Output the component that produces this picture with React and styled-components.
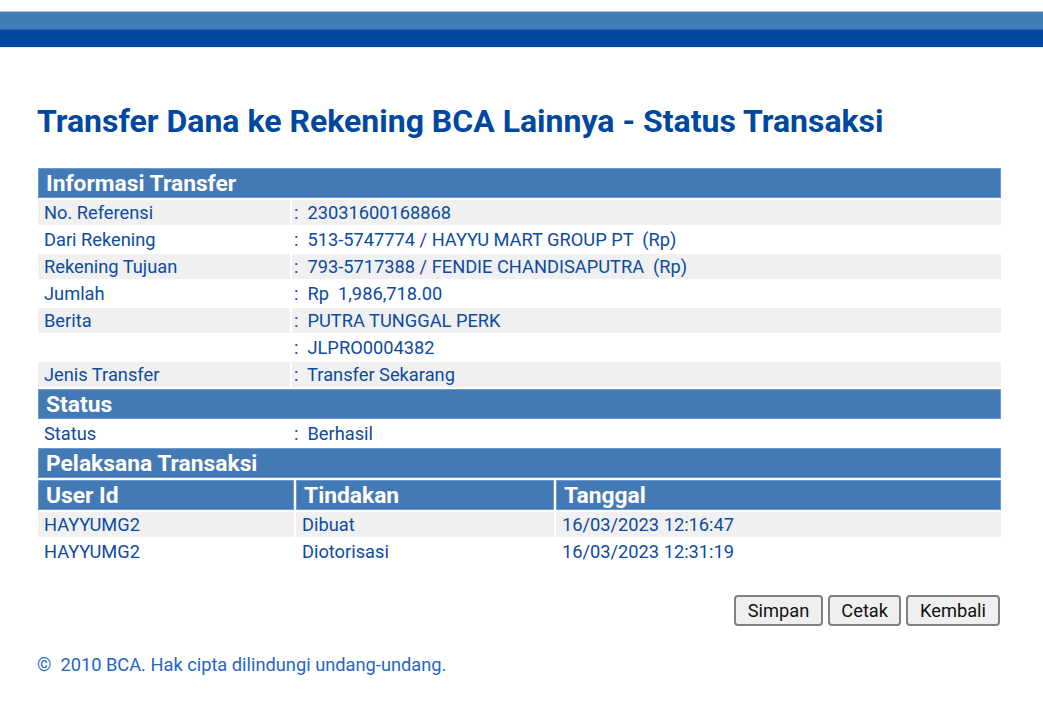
import React from 'react';
import styled, { createGlobalStyle } from 'styled-components';

const infoRows = [
  { label: 'No. Referensi', value: '23031600168868' },
  { label: 'Dari Rekening', value: '513-5747774 / HAYYU MART GROUP PT  (Rp)' },
  { label: 'Rekening Tujuan', value: '793-5717388 / FENDIE CHANDISAPUTRA  (Rp)' },
  { label: 'Jumlah', value: 'Rp  1,986,718.00' },
  { label: 'Berita', value: 'PUTRA TUNGGAL PERK' },
  { label: '', value: 'JLPRO0004382' },
  { label: 'Jenis Transfer', value: 'Transfer Sekarang' }
];

const actors = [
  { id: 'a1', user: 'HAYYUMG2', action: 'Dibuat', date: '16/03/2023 12:16:47' },
  { id: 'a2', user: 'HAYYUMG2', action: 'Diotorisasi', date: '16/03/2023 12:31:19' }
];

const GlobalStyle = createGlobalStyle`
  body {
    margin: 0;
    background: #fff;
    font-family: Roboto, "Liberation Sans", Arial, sans-serif;
  }
`;

const TopBar = styled.div`
  margin-top: 11px;
  border-top: 1px solid #a9c1dd;
  border-bottom: 1px solid #dfe9f5;
`;

const TopStripe = styled.div`
  height: 17px;
  background: ${props => props.dark ? '#0047a0' : '#437bb7'};
  border-top: ${props => props.dark ? '1px solid #2d64ad' : 'none'};
`;

const Content = styled.div`
  padding: 0 40px 0 36px;
`;

const Title = styled.h1`
  margin: 55px 0 27px 1px;
  font-size: 32px;
  font-weight: 700;
  line-height: 36px;
  color: #0047a0;
`;

const Table = styled.table`
  width: 100%;
  border-collapse: separate;
  border-spacing: 2px;
  margin-top: ${props => props.joined ? '-2px' : '0'};
  table-layout: fixed;
`;

const SectionHead = styled.th`
  height: 28px;
  padding: 0 0 0 7px;
  background: #437ab6;
  border: 1px solid #6d9ad0;
  color: #fff;
  font-size: 22.8px;
  font-weight: 700;
  text-align: left;
  white-space: nowrap;
`;

const Row = styled.tr`
  background: ${props => props.shade ? '#f0f0f0' : '#fff'};
`;

const Cell = styled.td`
  height: 25px;
  padding: 0 0 0 ${props => props.pad || 6}px;
  color: #0d4ba0;
  font-size: 18.25px;
  white-space: pre;
  vertical-align: middle;
`;

const ButtonBar = styled.div`
  display: flex;
  justify-content: flex-end;
  gap: 5px;
  margin: 29px 3px 0 0;
`;

const Button = styled.button`
  height: 31px;
  padding: 0 ${props => props.narrow ? 11 : 12}px;
  background: #efefef;
  border: 2px solid #808080;
  border-radius: 4px;
  color: #111;
  font-family: Roboto, "Liberation Sans", Arial, sans-serif;
  font-size: 18.25px;
`;

const Footer = styled.p`
  margin: 28px 0 0 1px;
  color: #1f66c6;
  font-size: 18.25px;
  white-space: pre;
`;

const InfoSection = () =>
  <Table>
    <colgroup>
      <col style={{ width: 252 }}/>
      <col/>
    </colgroup>
    <tbody>
      <tr>
        <SectionHead colSpan={2}>Informasi Transfer</SectionHead>
      </tr>
      {
        infoRows.map((row, i) =>
          <Row key={i} shade={i % 2 === 0}>
            <Cell>{row.label}</Cell>
            <Cell pad={2}>{':  ' + row.value}</Cell>
          </Row>
        )
      }
      <tr>
        <SectionHead colSpan={2}>Status</SectionHead>
      </tr>
      <Row>
        <Cell>Status</Cell>
        <Cell pad={2}>{':  Berhasil'}</Cell>
      </Row>
    </tbody>
  </Table>

const ActorSection = () =>
  <Table joined>
    <colgroup>
      <col style={{ width: 256 }}/>
      <col style={{ width: 258 }}/>
      <col/>
    </colgroup>
    <tbody>
      <tr>
        <SectionHead colSpan={3}>Pelaksana Transaksi</SectionHead>
      </tr>
      <tr>
        <SectionHead>User Id</SectionHead>
        <SectionHead>Tindakan</SectionHead>
        <SectionHead>Tanggal</SectionHead>
      </tr>
      {
        actors.map((a, i) =>
          <Row key={a.id} shade={i % 2 === 0}>
            <Cell>{a.user}</Cell>
            <Cell>{a.action}</Cell>
            <Cell>{a.date}</Cell>
          </Row>
        )
      }
    </tbody>
  </Table>

const App = () =>
  <>
    <GlobalStyle/>
    <TopBar>
      <TopStripe/>
      <TopStripe dark/>
    </TopBar>
    <Content>
      <Title>Transfer Dana ke Rekening BCA Lainnya - Status Transaksi</Title>
      <InfoSection/>
      <ActorSection/>
      <ButtonBar>
        <Button>Simpan</Button>
        <Button narrow>Cetak</Button>
        <Button>Kembali</Button>
      </ButtonBar>
      <Footer>{'©  2010 BCA. Hak cipta dilindungi undang-undang.'}</Footer>
    </Content>
  </>

export default App;
